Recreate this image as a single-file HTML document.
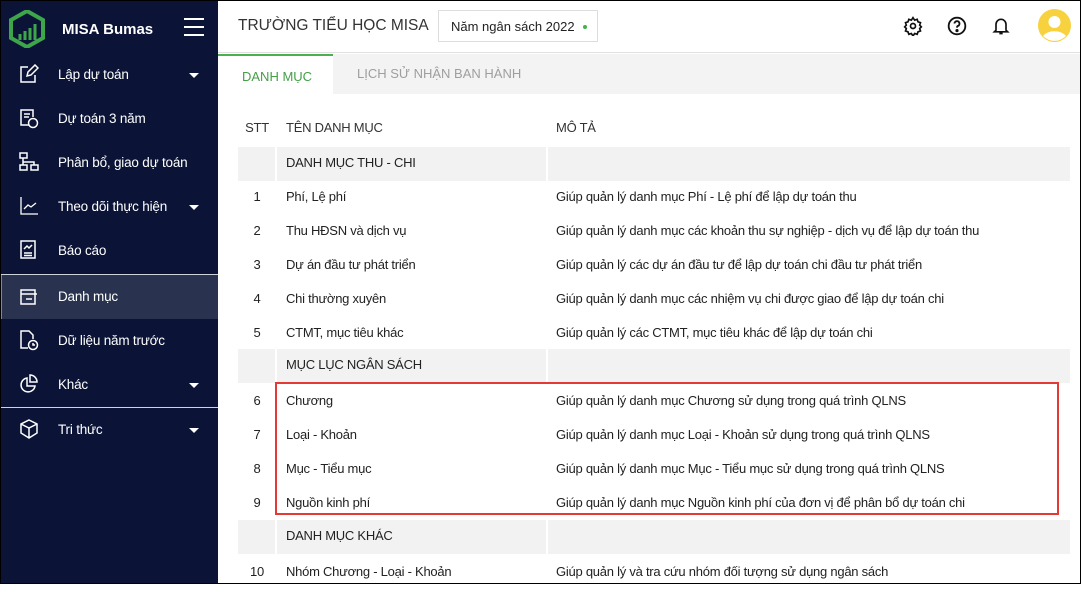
<!DOCTYPE html>
<html><head><meta charset="utf-8"><style>
*{box-sizing:border-box;margin:0;padding:0}
body{width:1081px;height:584px;overflow:hidden;font-family:"Liberation Sans",sans-serif;background:#fff;position:relative}
.frame{position:absolute;inset:0;border:1px solid #000;pointer-events:none;z-index:9}
.side{position:absolute;left:0;top:0;width:218px;height:584px;background:#0b1437;color:#fff}
.logo{position:absolute;left:9px;top:10px}
.brand{position:absolute;left:62px;top:21px;font-weight:bold;font-size:15px}
.ham{position:absolute;left:184px;top:18px;width:20px}
.ham i{display:block;height:2px;background:#fff;margin-bottom:6px}
.item{position:absolute;left:0;width:218px;height:44px;font-size:13.5px;letter-spacing:-.2px}
.item span{position:absolute;left:58px;top:14px}
.item svg{position:absolute;left:19px;top:11px}
.item .car{position:absolute;left:189px;top:20px;border-left:5px solid transparent;border-right:5px solid transparent;border-top:5px solid #fff}
.act{background:#29334f;border-left:2px solid #4caf50}
.hr{position:absolute;left:0;width:218px;height:1px;background:#cfd3dc}
.top{position:absolute;left:218px;top:0;right:0;height:53px;border-bottom:1px solid #e0e0e0}
.school{position:absolute;left:20px;top:17px;font-size:15.5px;color:#333}
.year{position:absolute;left:220px;top:10px;width:160px;height:32px;border:1px solid #ddd;font-size:13px;color:#222;padding:8px 0 0 12px}
.year b{position:absolute;right:10px;top:14px;width:4px;height:4px;border-radius:50%;background:#3db54a}
.tabs{position:absolute;left:218px;top:54px;right:0;height:40px;background:#f3f3f3}
.t1{position:absolute;left:0;top:0;width:115px;height:40px;background:#fff;border-top:2px solid #4caf50;color:#43a047;font-size:13px;padding:13px 0 0 24px}
.t2{position:absolute;left:139px;top:12px;color:#9e9e9e;font-size:13px}
.row{position:absolute;left:238px;width:832px;height:34px;font-size:13px;color:#222;letter-spacing:-.25px}
.row div{position:absolute;top:8px}
.c1{left:0;width:38px;text-align:center}.c2{left:48px}.c3{left:318px}
.sec{background:#f2f2f2}
.sec:before,.sec:after{content:"";position:absolute;top:0;width:2px;height:34px;background:#fff}
.sec:before{left:37px}.sec:after{left:308px}
.hd{color:#333}
.box{position:absolute;left:275px;top:382px;width:784px;height:133px;border:2px solid #e53935}
</style></head><body>
<div class="side">
<svg class="logo" width="36" height="38" viewBox="0 0 36 38"><path d="M18 1 L34 10 L34 28 L18 37 L2 28 L2 10 Z" fill="none" stroke="#3da64a" stroke-width="4"/><path d="M11 30v-6M16 30v-9M21 30v-12M26 30v-16" stroke="#3da64a" stroke-width="3"/></svg>
<div class="brand">MISA Bumas</div>
<div class="ham"><i></i><i></i><i></i></div>
<div class="item" style="top:53px"><svg width="20" height="20" fill="none" stroke="#fff" stroke-width="1.5"><path d="M9 3H2v15h14v-7M8 12l1-4 7-7 3 3-7 7z"/></svg><span>Lập dự toán</span><i class="car"></i></div>
<div class="item" style="top:97px"><svg width="20" height="22" fill="none" stroke="#fff" stroke-width="1.5"><path d="M10 17H2V2h12v7M5 6h6M5 9h5"/><circle cx="14" cy="15" r="4.5"/></svg><span>Dự toán 3 năm</span></div>
<div class="item" style="top:141px"><svg width="20" height="20" fill="none" stroke="#fff" stroke-width="1.5"><rect x="1" y="1" width="7" height="5"/><rect x="1" y="13" width="7" height="5"/><rect x="12" y="13" width="7" height="5"/><path d="M4 6v7M4 10h11v3"/></svg><span>Phân bổ, giao dự toán</span></div>
<div class="item" style="top:185px"><svg width="20" height="20" fill="none" stroke="#fff" stroke-width="1.3"><path d="M2 1v17h17M5 13l4-4 3 2 5-4"/></svg><span>Theo dõi thực hiện</span><i class="car"></i></div>
<div class="item" style="top:229px"><svg width="20" height="20" fill="none" stroke="#fff" stroke-width="1.5"><rect x="2" y="1" width="14" height="17"/><path d="M5 9l3-3 2 2 3-3M5 13h8M5 15.5h8"/></svg><span>Báo cáo</span></div>
<div class="hr" style="top:274px"></div>
<div class="item act" style="top:275px;height:44px"><svg width="20" height="20" fill="none" stroke="#fff" stroke-width="1.5" style="left:17px"><path d="M2 4h14v14H2zM2 8h16M7 13h6"/></svg><span style="left:56px">Danh mục</span></div>
<div class="item" style="top:319px"><svg width="20" height="22" fill="none" stroke="#fff" stroke-width="1.5"><path d="M9 18H2V1h8l4 4v4"/><circle cx="14" cy="15" r="4.5"/><path d="M14 13v2h2"/></svg><span>Dữ liệu năm trước</span></div>
<div class="item" style="top:363px"><svg width="20" height="20" fill="none" stroke="#fff" stroke-width="1.5"><path d="M8 4a7 7 0 1 0 8 8H8z"/><path d="M11 1a7 7 0 0 1 7 7h-7z"/></svg><span>Khác</span><i class="car"></i></div>
<div class="hr" style="top:407px"></div>
<div class="item" style="top:408px"><svg width="20" height="20" fill="none" stroke="#fff" stroke-width="1.5"><path d="M10 1l8 4v9l-8 5-8-5V5zM2 5l8 4 8-4M10 9v10"/></svg><span>Tri thức</span><i class="car"></i></div>
</div>
<div class="top">
<div class="school">TRƯỜNG TIỂU HỌC MISA</div>
<div class="year">Năm ngân sách 2022<b></b></div>
<svg style="position:absolute;left:685px;top:16px" width="20" height="20" viewBox="0 0 24 24" fill="none" stroke="#111" stroke-width="2"><circle cx="12" cy="12" r="3"/><path d="M12 2l2 3 3-1 1 3 3 1-1 3 2 2-2 2 1 3-3 1-1 3-3-1-2 3-2-3-3 1-1-3-3-1 1-3-2-2 2-2-1-3 3-1 1-3 3 1z"/></svg>
<svg style="position:absolute;left:729px;top:16px" width="20" height="20" viewBox="0 0 24 24" fill="none" stroke="#111" stroke-width="2.2"><circle cx="12" cy="12" r="10"/><path d="M9 9a3 3 0 1 1 4 3c-1 .5-1 1-1 2"/><circle cx="12" cy="17.5" r=".8" fill="#111"/></svg>
<svg style="position:absolute;left:773px;top:15px" width="20" height="22" viewBox="0 0 24 24" fill="none" stroke="#111" stroke-width="2"><path d="M6 17V10a6 6 0 0 1 12 0v7l2 2H4zM10 21h4"/></svg>
<svg style="position:absolute;left:820px;top:9px" width="33" height="33" viewBox="0 0 33 33"><circle cx="16.5" cy="16.5" r="16.5" fill="#f7d23e"/><circle cx="16.5" cy="13" r="6" fill="#fff"/><path d="M5 27a13 9 0 0 1 23 0a16 16 0 0 1-23 0z" fill="#fff"/></svg>
</div>
<div class="tabs"><div class="t1">DANH MỤC</div><div class="t2">LỊCH SỬ NHẬN BAN HÀNH</div></div>

<div class="row hd" style="top:112px"><div class="c1">STT</div><div class="c2">TÊN DANH MỤC</div><div class="c3">MÔ TẢ</div></div>
<div class="row sec" style="top:147px"><div class="c2">DANH MỤC THU - CHI</div></div>
<div class="row" style="top:181px"><div class="c1">1</div><div class="c2">Phí, Lệ phí</div><div class="c3">Giúp quản lý danh mục Phí - Lệ phí để lập dự toán thu</div></div>
<div class="row" style="top:215px"><div class="c1">2</div><div class="c2">Thu HĐSN và dịch vụ</div><div class="c3">Giúp quản lý danh mục các khoản thu sự nghiệp - dịch vụ để lập dự toán thu</div></div>
<div class="row" style="top:249px"><div class="c1">3</div><div class="c2">Dự án đầu tư phát triển</div><div class="c3">Giúp quản lý các dự án đầu tư để lập dự toán chi đầu tư phát triển</div></div>
<div class="row" style="top:283px"><div class="c1">4</div><div class="c2">Chi thường xuyên</div><div class="c3">Giúp quản lý danh mục các nhiệm vụ chi được giao để lập dự toán chi</div></div>
<div class="row" style="top:317px"><div class="c1">5</div><div class="c2">CTMT, mục tiêu khác</div><div class="c3">Giúp quản lý các CTMT, mục tiêu khác để lập dự toán chi</div></div>
<div class="row sec" style="top:349px"><div class="c2">MỤC LỤC NGÂN SÁCH</div></div>
<div class="row" style="top:385px"><div class="c1">6</div><div class="c2">Chương</div><div class="c3">Giúp quản lý danh mục Chương sử dụng trong quá trình QLNS</div></div>
<div class="row" style="top:419px"><div class="c1">7</div><div class="c2">Loại - Khoản</div><div class="c3">Giúp quản lý danh mục Loại - Khoản sử dụng trong quá trình QLNS</div></div>
<div class="row" style="top:453px"><div class="c1">8</div><div class="c2">Mục - Tiểu mục</div><div class="c3">Giúp quản lý danh mục Mục - Tiểu mục sử dụng trong quá trình QLNS</div></div>
<div class="row" style="top:487px"><div class="c1">9</div><div class="c2">Nguồn kinh phí</div><div class="c3">Giúp quản lý danh mục Nguồn kinh phí của đơn vị để phân bổ dự toán chi</div></div>
<div class="row sec" style="top:520px"><div class="c2">DANH MỤC KHÁC</div></div>
<div class="row" style="top:556px"><div class="c1">10</div><div class="c2">Nhóm Chương - Loại - Khoản</div><div class="c3">Giúp quản lý và tra cứu nhóm đối tượng sử dụng ngân sách</div></div>
<div class="box"></div>
<div class="frame"></div>
</body></html>
